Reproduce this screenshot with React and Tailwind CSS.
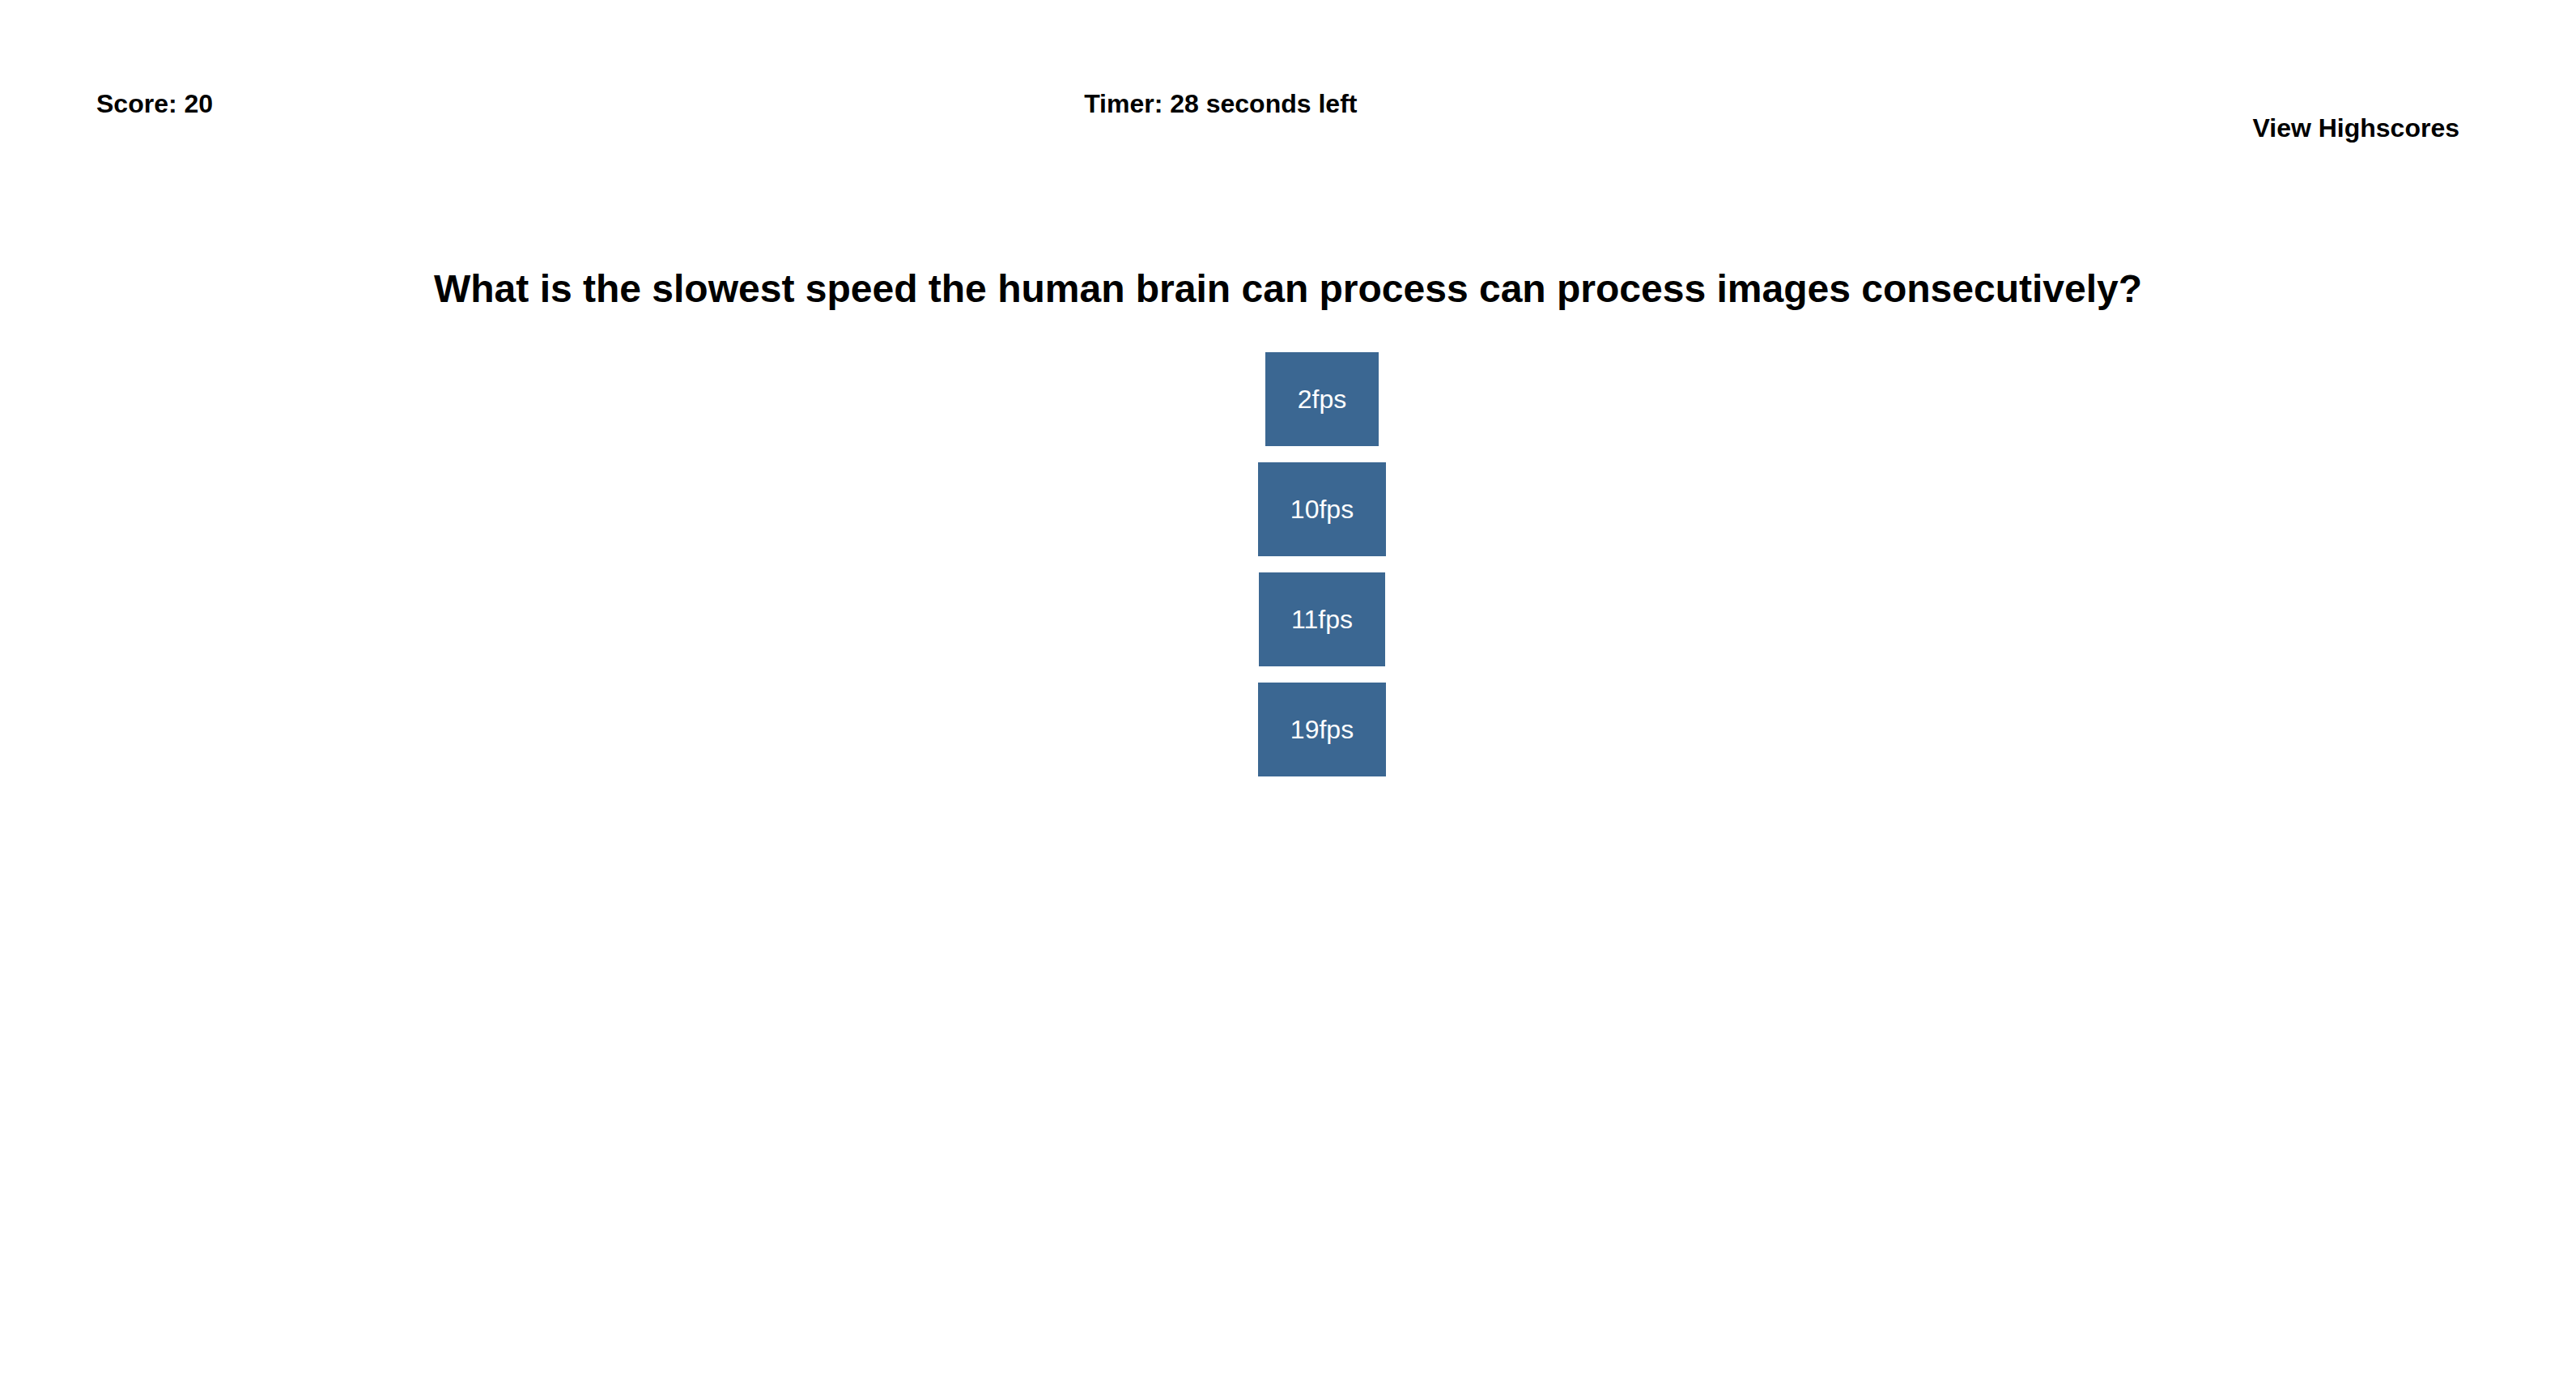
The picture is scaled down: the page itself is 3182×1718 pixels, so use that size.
import React, { useState } from 'react';

const choices = ['2fps', '10fps', '11fps', '19fps'];

const App = () => {
  const [score] = useState(20);
  const [timeLeft] = useState(28);

  return (
    <div
      className="min-h-screen bg-white text-black"
      style={{ fontFamily: '"Liberation Sans", Arial, sans-serif' }}
    >
      {/* Header */}
      <header className="flex justify-between items-start pt-[110px] pl-[119px] pr-[144px]">
        <p className="text-[32px] leading-[37px] font-bold">Score: {score}</p>
        <p className="mr-[30px] text-[32px] leading-[37px] font-bold">Timer: {timeLeft} seconds left</p>
        <a href="#" className="mt-[30px] text-[32px] leading-[37px] font-bold">View Highscores</a>
      </header>

      {/* Question */}
      <main className="mt-[152px]">
        <h2 className="text-center text-[48px] leading-[55px] font-bold">
          What is the slowest speed the human brain can process can process images consecutively?
        </h2>

        <div className="mt-[51px] flex flex-col items-center gap-[20px] pl-[84px]">
          {choices.map((choice) => (
            <button
              key={choice}
              className="h-[116px] px-[40px] flex items-center justify-center bg-[#3b6792] text-white text-[32px] leading-[37px]"
            >
              {choice}
            </button>
          ))}
        </div>
      </main>
    </div>
  );
};

export default App;
